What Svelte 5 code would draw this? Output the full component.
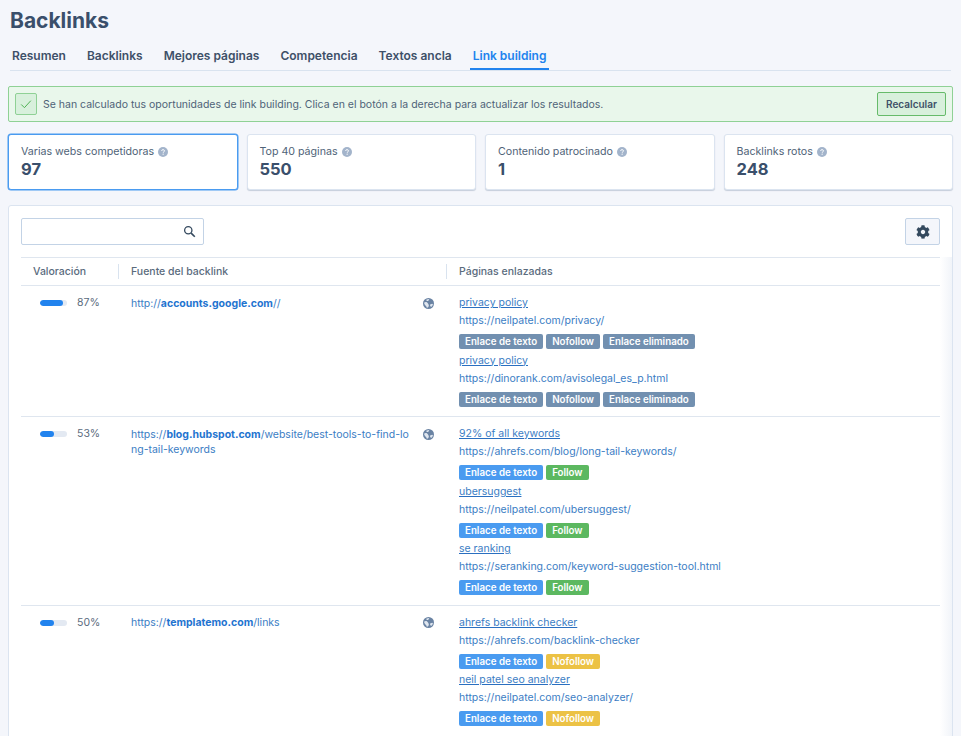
<script>
  const tabs = ['Resumen', 'Backlinks', 'Mejores páginas', 'Competencia', 'Textos ancla', 'Link building'];
  const active = 'Link building';

  const cards = [
    { label: 'Varias webs competidoras', value: '97', selected: true },
    { label: 'Top 40 páginas', value: '550' },
    { label: 'Contenido patrocinado', value: '1' },
    { label: 'Backlinks rotos', value: '248' }
  ];

  const removed = ['Enlace eliminado'];

  const rows = [
    {
      score: 87,
      pre: 'http://',
      host: 'accounts.google.com',
      post: '//',
      links: [
        { text: 'privacy policy', url: 'https://neilpatel.com/privacy/', follow: 'Nofollow', tone: 'grey', extra: removed },
        { text: 'privacy policy', url: 'https://dinorank.com/avisolegal_es_p.html', follow: 'Nofollow', tone: 'grey', extra: removed }
      ]
    },
    {
      score: 53,
      pre: 'https://',
      host: 'blog.hubspot.com',
      post: '/website/best-tools-to-find-long-tail-keywords',
      links: [
        { text: '92% of all keywords', url: 'https://ahrefs.com/blog/long-tail-keywords/', follow: 'Follow', tone: 'blue' },
        { text: 'ubersuggest', url: 'https://neilpatel.com/ubersuggest/', follow: 'Follow', tone: 'blue' },
        { text: 'se ranking', url: 'https://seranking.com/keyword-suggestion-tool.html', follow: 'Follow', tone: 'blue' }
      ]
    },
    {
      score: 50,
      pre: 'https://',
      host: 'templatemo.com',
      post: '/links',
      links: [
        { text: 'ahrefs backlink checker', url: 'https://ahrefs.com/backlink-checker', follow: 'Nofollow', tone: 'blue' },
        { text: 'neil patel seo analyzer', url: 'https://neilpatel.com/seo-analyzer/', follow: 'Nofollow', tone: 'blue' }
      ]
    }
  ];
</script>

{#snippet help()}
  <svg class="help" viewBox="0 0 16 16" aria-hidden="true">
    <circle cx="8" cy="8" r="8" fill="#a3b4cb" />
    <path d="M5.7 6.2c.1-1.3 1.1-2 2.4-2 1.300 0 2.300.8 2.300 1.900 0 1.700-2.100 1.600-2.100 3.100" fill="none" stroke="#fff" stroke-width="1.500" />
    <circle cx="8.200" cy="11.500" r="1" fill="#fff" />
  </svg>
{/snippet}

<main class="page">
  <h1>Backlinks</h1>

  <nav class="tabs">
    {#each tabs as tab}
      <span class="tab" class:active={tab === active}>{tab}</span>
    {/each}
  </nav>

  <div class="alert">
    <span class="check">
      <svg viewBox="0 0 16 16" width="14" height="14" aria-hidden="true">
        <path d="M2.500 8.500l3.700 3.700 7.300-8" fill="none" stroke="#4caf50" stroke-width="1.100" />
      </svg>
    </span>
    <span class="alert-text">Se han calculado tus oportunidades de link building. Clica en el botón a la derecha para actualizar los resultados.</span>
    <button class="recalc" type="button">Recalcular</button>
  </div>

  <section class="cards">
    {#each cards as card}
      <div class="card" class:selected={card.selected}>
        <div class="card-label">{card.label} {@render help()}</div>
        <div class="card-value">{card.value}</div>
      </div>
    {/each}
  </section>

  <section class="panel">
    <div class="toolbar">
      <div class="search">
        <svg viewBox="0 0 16 16" width="13" height="13" aria-hidden="true">
          <circle cx="6.500" cy="6.500" r="4.500" fill="none" stroke="#34495e" stroke-width="1.600" />
          <path d="M10 10l4.500 4.500" stroke="#34495e" stroke-width="2" />
        </svg>
      </div>
      <button class="settings" type="button" aria-label="Ajustes">
        <svg viewBox="0 0 512 512" width="14" height="14" aria-hidden="true">
          <path fill="#34495e" d="M487.400 315.700l-42.600-24.600c4.300-23.200 4.300-47 0-70.200l42.600-24.600c4.900-2.800 7.100-8.600 5.500-14-11.100-35.600-30-67.800-54.700-94.600-3.800-4.100-10-5.100-14.800-2.300L380.800 110c-17.900-15.400-38.500-27.300-60.800-35.100V25.800c0-5.600-3.900-10.500-9.400-11.700-36.700-8.200-74.300-7.800-109.200 0-5.500 1.200-9.400 6.100-9.400 11.700V75c-22.200 7.900-42.800 19.800-60.800 35.100L88.700 85.500c-4.900-2.800-11-1.900-14.800 2.300-24.700 26.700-43.600 58.900-54.700 94.600-1.700 5.400.6 11.200 5.500 14L67.300 221c-4.300 23.200-4.300 47 0 70.200l-42.600 24.600c-4.900 2.800-7.100 8.600-5.500 14 11.100 35.600 30 67.800 54.700 94.600 3.800 4.100 10 5.100 14.800 2.300l42.600-24.600c17.900 15.400 38.500 27.300 60.800 35.100v49.200c0 5.600 3.900 10.500 9.400 11.700 36.700 8.200 74.300 7.800 109.200 0 5.500-1.200 9.400-6.100 9.400-11.700v-49.200c22.200-7.900 42.800-19.800 60.800-35.100l42.600 24.600c4.900 2.800 11 1.900 14.800-2.300 24.700-26.700 43.600-58.900 54.700-94.600 1.500-5.500-.7-11.300-5.600-14.100zM256 336c-44.100 0-80-35.900-80-80s35.900-80 80-80 80 35.900 80 80-35.900 80-80 80z" />
        </svg>
      </button>
    </div>

    <div class="table">
      <div class="head">
        <div class="th col-score">Valoración</div>
        <div class="th col-source">Fuente del backlink</div>
        <div class="th col-pages">Páginas enlazadas</div>
      </div>

      {#each rows as row}
        <div class="row">
          <div class="col-score score">
            <span class="bar"><span class="fill" style="width: {row.score}%"></span></span>
            <span class="pct">{row.score}%</span>
          </div>
          <div class="col-source source">
            <a class="source-link" href="#top">{row.pre}<b>{row.host}</b>{row.post}</a>
            <svg class="globe" viewBox="0 0 16 16" width="11" height="11" aria-hidden="true">
              <circle cx="8" cy="8" r="8" fill="#6a83a3" />
              <path fill="#dfe6ef" d="M1.500 7C3.500 5.200 5.800 5.800 7 7.800c1 1.700 2 2.400 1.300 4.200-.5 1.400-1.800 2.500-2.800 2-.2-1.800-1.200-2.600-2.300-3.600C2.300 9.600 1.700 8.400 1.500 7zM10.300 9.600l3-1.200 1.200.8c-.3 1.500-1.300 3-2.500 3.800l-1.600-1.300zM4.700 2.700 8 1.500l1.200.9-2 2.100-1.800-.2z" />
            </svg>
          </div>
          <div class="col-pages pages">
            {#each row.links as link}
              <a class="anchor" href="#top">{link.text}</a>
              <a class="url" href="#top">{link.url}</a>
              <div class="tags">
                <span class="tag {link.tone}">Enlace de texto</span>
                <span class="tag {link.follow === 'Follow' ? 'green' : link.tone === 'grey' ? 'grey' : 'yellow'}">{link.follow}</span>
                {#each link.extra ?? [] as extra}
                  <span class="tag grey">{extra}</span>
                {/each}
              </div>
            {/each}
          </div>
        </div>
      {/each}
    </div>
    <div class="edge"></div>
  </section>
</main>

<style>
  :global(body) {
    margin: 0;
    background: #f4f6fb;
    font-family: Inter, "Noto Sans", sans-serif;
    color: #3a4f6b;
  }

  .page {
    height: 736px;
    overflow: hidden;
    padding: 0 8px;
    box-sizing: border-box;
  }

  h1 {
    margin: 0;
    padding: 8px 0 0 2px;
    font-size: 21px;
    line-height: 26px;
    font-weight: 700;
    color: #3a4f6b;
  }

  .tabs {
    display: flex;
    gap: 21px;
    margin: 10px 2px 0 2px;
    padding: 0 2px;
    height: 26px;
    border-bottom: 1px solid #d9e3ef;
  }

  .tab {
    font-size: 12px;
    font-weight: 600;
    line-height: 23px;
    color: #3e5068;
    height: 25px;
  }

  .tab.active {
    color: #2183ee;
    border-bottom: 2px solid #2183ee;
    margin-left: -3px;
    padding: 0 3px;
    height: 24px;
    margin-right: -3px;
  }

  .alert {
    display: flex;
    align-items: center;
    height: 36px;
    box-sizing: border-box;
    margin-top: 15px;
    padding: 0 6px;
    background: #e9f7eb;
    border: 1px solid #8fd195;
    border-radius: 2px;
  }

  .check {
    display: flex;
    align-items: center;
    justify-content: center;
    box-sizing: border-box;
    flex: none;
    width: 22px;
    height: 22px;
    margin-right: 6px;
    background: #d8f0dc;
    border: 1px solid #8fd195;
    border-radius: 2px;
  }

  .alert-text {
    flex: 1;
    font-size: 10.500px;
    color: #4f6378;
  }

  .recalc {
    width: 69px;
    height: 24px;
    padding: 0;
    font: 600 10px Inter, sans-serif;
    color: #3e5068;
    background: #d8f0dc;
    border: 1px solid #66bb6a;
    border-radius: 2px;
  }

  .cards {
    display: grid;
    grid-template-columns: repeat(4, 1fr);
    gap: 9px;
    margin-top: 12px;
  }

  .card {
    height: 56px;
    box-sizing: border-box;
    padding: 10px 12px;
    background: #fff;
    border: 1px solid #dbe4f0;
    border-radius: 3px;
    box-shadow: 0 1px 1px #c5cedb;
  }

  .card.selected {
    border-color: #4a9bf0;
    box-shadow: 0 0 0 0.5px #4a9bf0;
  }

  .card-label {
    display: flex;
    align-items: center;
    gap: 4px;
    font-size: 10.650px;
    line-height: 14px;
    color: #4f6378;
  }

  .help {
    width: 10px;
    height: 10px;
  }

  .card-value {
    font-size: 16.500px;
    font-weight: 700;
    line-height: 20px;
    color: #3a4f6b;
  }

  .panel {
    position: relative;
    margin-top: 15px;
    height: 600px;
    padding: 12px 12px 0 12px;
    background: #fff;
    border: 1px solid #dbe4f0;
    border-radius: 3px;
  }

  .edge {
    position: absolute;
    top: 51px;
    right: 0;
    bottom: 0;
    width: 12px;
    background: linear-gradient(to right, #fff, #f1f4f9);
  }

  .toolbar {
    display: flex;
    justify-content: space-between;
    height: 27px;
  }

  .search {
    display: flex;
    align-items: center;
    justify-content: flex-end;
    box-sizing: border-box;
    width: 183px;
    height: 27px;
    padding-right: 7px;
    border: 1px solid #c3d3e6;
    border-radius: 2px;
  }

  .settings {
    display: flex;
    align-items: center;
    justify-content: center;
    width: 35px;
    height: 27px;
    padding: 0;
    background: #f4f6fb;
    border: 1px solid #c3d3e6;
    border-radius: 2px;
  }

  .table {
    margin-top: 12px;
  }

  .head {
    display: flex;
    height: 27px;
    align-items: center;
    border-top: 1px solid #dfe6ef;
    border-bottom: 1px solid #dfe6ef;
  }

  .col-score {
    width: 97px;
    flex: none;
  }

  .col-source {
    width: 328px;
    flex: none;
    box-sizing: border-box;
  }

  .col-pages {
    flex: 1;
  }

  .th {
    box-sizing: border-box;
    height: 15px;
    font-size: 10.500px;
    font-weight: 500;
    line-height: 15px;
    color: #5a6b7d;
  }

  .th.col-score {
    padding-left: 12px;
  }

  .th.col-source,
  .th.col-pages {
    padding-left: 12px;
    border-left: 1px solid #d9e3ef;
  }

  .row {
    display: flex;
    padding: 7px 0 8px;
    border-bottom: 1px solid #dfe6ef;
  }

  .row:last-child {
    border-bottom: 0;
  }

  .score {
    display: flex;
    align-items: flex-start;
    padding: 3px 0 0 19px;
    box-sizing: border-box;
    height: 20px;
  }

  .bar {
    width: 27px;
    height: 6px;
    margin-top: 4px;
    background: #e3e9f2;
    border-radius: 3px;
    overflow: hidden;
  }

  .fill {
    display: block;
    height: 100%;
    background: #2183ee;
    border-radius: 3px;
  }

  .pct {
    margin-left: 10px;
    font-size: 10.500px;
    line-height: 14px;
    color: #5a6b7d;
  }

  .source {
    display: flex;
    justify-content: space-between;
    align-items: flex-start;
    padding: 2.500px 12px 0 13px;
  }

  .source-link {
    width: 282px;
    font-size: 10.500px;
    line-height: 15px;
    color: #3b7dc4;
    text-decoration: none;
    word-break: break-all;
  }

  .source-link b {
    font-weight: 700;
    color: #1f74d0;
  }

  .globe {
    margin-top: 2px;
  }

  .pages {
    display: flex;
    flex-direction: column;
    align-items: flex-start;
    padding-left: 13px;
    font-size: 10.500px;
  }

  .anchor {
    line-height: 19px;
    color: #3b7dc4;
    text-decoration-color: #2a6fc0;
  }

  .url {
    line-height: 18.750px;
    color: #3b7dc4;
    text-decoration: none;
  }

  .tags {
    display: flex;
    gap: 3px;
    margin: 3.500px 0 1.250px;
    height: 15px;
  }

  .tag {
    padding: 0 6px;
    font-size: 9.750px;
    font-weight: 600;
    line-height: 15px;
    color: #fff;
    border-radius: 2px;
  }

  .grey {
    background: #7290b0;
  }

  .blue {
    background: #4a9bf0;
  }

  .green {
    background: #5cb860;
  }

  .yellow {
    background: #ecc245;
  }
</style>
